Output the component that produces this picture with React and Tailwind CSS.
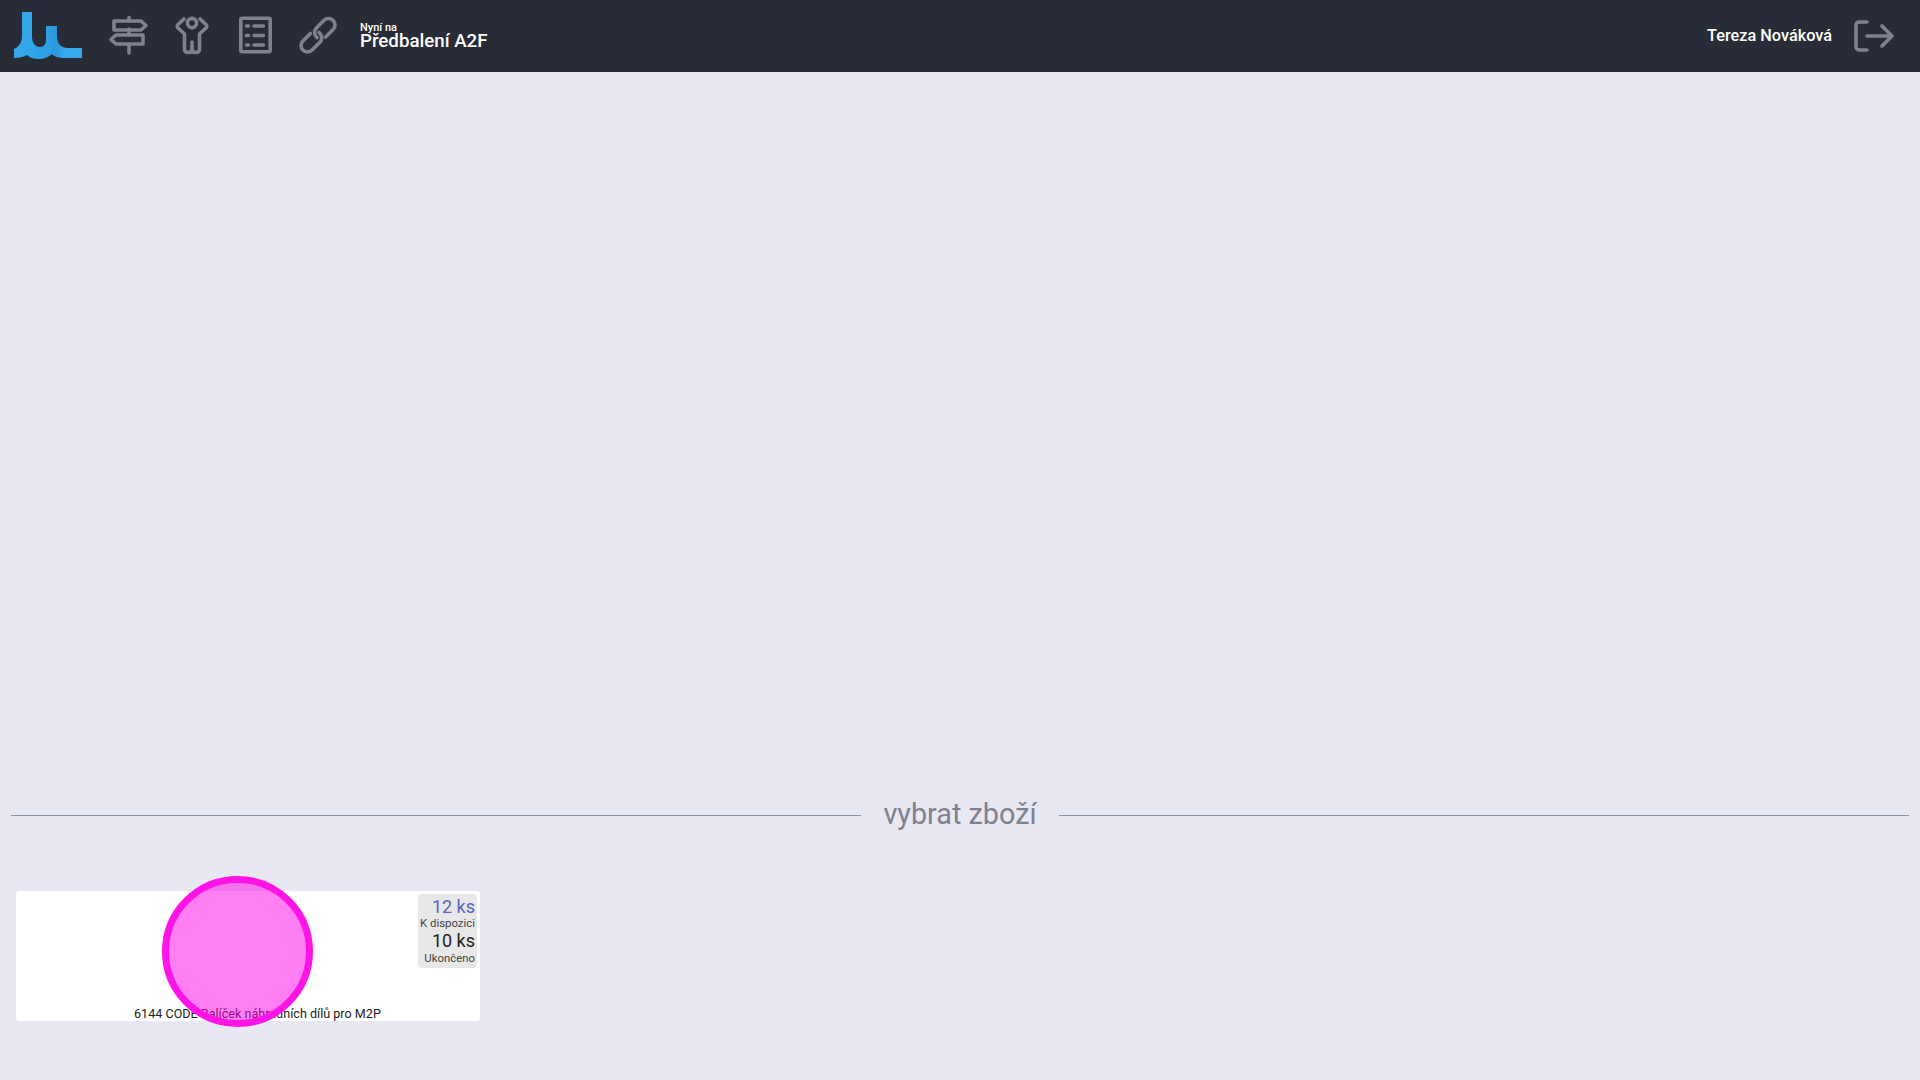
import React from "react";

const Logo = () => (
  <svg width="70" height="48" viewBox="0 0 70 48" className="block">
    <defs>
      <linearGradient id="logoShade" x1="0" y1="0" x2="1" y2="0">
        <stop offset="0" stopColor="#35a9ec" />
        <stop offset="0.5" stopColor="#2f9fe4" />
        <stop offset="0.62" stopColor="#2b97dc" />
        <stop offset="0.75" stopColor="#35a9ec" />
      </linearGradient>
    </defs>
    <path
      d="M8 0H18V24C18 31 21 35 26 35C30 35 32 32 32 28V14H43V24C43 32 47 36 54 36H68V46H50C45 46 41 45.5 38 42C34 45.5 30 47 25 47C20 47 16 46 13 43C10 45 5 46 0 46V37C5 35 8 30 8 24Z"
      fill="url(#logoShade)"
    />
  </svg>
);

const Stroke = ({ children, w = 38, h = 38 }) => (
  <svg width={w} height={h} viewBox="0 0 38 38" fill="none" stroke="#7f818e" strokeWidth="3.6" strokeLinecap="round" strokeLinejoin="round" className="block overflow-visible">
    {children}
  </svg>
);

export default function App() {
  return (
    <div className="min-h-[1080px] bg-[#e7e8f2] font-['Roboto',sans-serif] flex flex-col">
      <header className="h-[72px] bg-[#282c37] flex items-center shrink-0 pl-[14px] pr-[26px]">
        <Logo />
        <div className="ml-[26px] mb-[3px] flex items-center gap-[25px]">
          <Stroke>
            <path d="M19 1.5V5M19 13V19M19 28V37" />
            <path d="M4 5H31L36 9.5L31 14H4Z" />
            <path d="M33 19H6L1 23.5L6 28H33Z" />
          </Stroke>
          <Stroke>
            <circle cx="19" cy="7" r="4.6" />
            <path d="M11 3 L5 8.5C4 9.5 4 11 5 12L11.5 18V33C11.5 35.5 13 36.5 15 36.5C17 36.5 19 35.5 19 33V26V33C19 35.5 21 36.5 23 36.5C25 36.5 26.5 35.5 26.5 33V18L33 12C34 11 34 9.5 33 8.5L27 3" />
          </Stroke>
          <Stroke>
            <rect x="4.8" y="2.3" width="29.4" height="33.4" rx="1.5" />
            <path d="M10.5 10H12.5M10.5 19.5H12.5M10.5 29H12.5M18 10H27.5M18 19.5H27.5M18 29H27.5" />
          </Stroke>
          <Stroke>
            <path d="M18 21.5A6.5 6.5 0 0 1 17.4 11.9L24.9 4.4A6.5 6.5 0 0 1 34.1 13.6L26.6 21.1" />
            <path d="M20 16.5A6.5 6.5 0 0 1 20.6 26.6L13.1 34.1A6.5 6.5 0 0 1 3.9 24.9L11.4 17.4" />
          </Stroke>
        </div>
        <div className="ml-[23px] flex flex-col text-white font-medium -mt-[1px]">
          <span className="text-[11px] leading-[11px]">Nyní na</span>
          <span className="text-[18.7px] leading-[15px] mt-[1px]">Předbalení A2F</span>
        </div>
        <div className="ml-auto flex items-center gap-[22px]">
          <span className="text-white font-medium text-[16.3px]">Tereza Nováková</span>
          <svg width="40" height="32" viewBox="0 0 40 32" fill="none" stroke="#7f818e" strokeWidth="3.6" strokeLinecap="round" strokeLinejoin="round" className="block">
            <path d="M13 2H6C3 2 2 3 2 6v20c0 3 1 4 4 4h7" />
            <path d="M13 16h25M28 6l10 10-10 10" />
          </svg>
        </div>
      </header>

      <main className="flex-1 flex flex-col px-[11px]">
        <div className="mt-[724px] flex items-center h-[36px]">
          <div className="flex-1 h-px bg-[#8e90a8] mt-[2px]" />
          <span className="px-[22px] text-[#7f818e] text-[28.8px] leading-[36px]">vybrat zboží</span>
          <div className="flex-1 h-px bg-[#8e90a8] mt-[2px]" />
        </div>

        <div className="relative mt-[59px] ml-[5px] w-[464px] h-[130px] bg-white rounded-[3px]">
          <div className="absolute right-[3px] top-[3px] w-[59px] h-[74px] bg-[#e8e8e8] rounded-[4px] pt-[3px] pr-[2px] text-right flex flex-col whitespace-nowrap">
            <span className="text-[18px] leading-[20px] text-[#5563c1]">12 ks</span>
            <span className="text-[11.4px] leading-[12px] text-[#444]">K dispozici</span>
            <span className="text-[18px] leading-[20px] mt-[2px] text-[#222]">10 ks</span>
            <span className="text-[11.4px] leading-[12px] mt-[1px] text-[#444]">Ukončeno</span>
          </div>
          <div className="absolute left-[118px] bottom-[0px] text-[12.6px] leading-[15px] text-[#222] whitespace-nowrap">
            6144 CODE Balíček náhradních dílů pro M2P
          </div>
          <div className="absolute left-[146px] top-[-15px] w-[151px] h-[151px] rounded-full border-[7px] border-[#ff14e6] bg-[#ff00e6]/50" />
        </div>
      </main>
    </div>
  );
}
